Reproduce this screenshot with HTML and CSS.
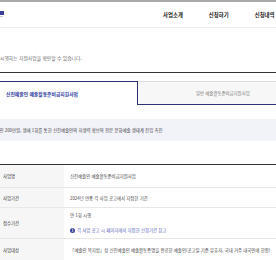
FILE: index.html
```html
<!DOCTYPE html>
<html lang="ko">
<head>
    <meta charset="UTF-8">
    <meta name="viewport" content="width=device-width, initial-scale=1.0">
    <title>예술활동준비금지원사업</title>
    <link rel="stylesheet" href="styles.css">
</head>
<body>
    <div class="topline"></div>
    <header class="header">
        <div class="logo">
            <svg width="4" height="6" viewBox="0 0 4 6"><rect x="0" y="0" width="4" height="4" fill="#3b3f9c"/><rect x="0" y="5" width="3" height="1" fill="#c9c9d6"/></svg>
        </div>
        <nav class="gnb">
            <a href="#">사업소개</a>
            <a href="#">신청하기</a>
            <a href="#">신청내역</a>
        </nav>
    </header>

    <main class="content">
        <p class="intro">시행하는 지원사업을 확인할 수 있습니다.</p>

        <div class="tab-wrap">
            <ul class="tabs">
                <li class="tab active">신진예술인 예술활동준비금지원사업</li>
                <li class="tab">일반 예술활동준비금지원사업</li>
            </ul>
        </div>

        <div class="summary">
            <p>1인 200만원, 생애 1회를 통한 신진예술인의 자생력 확보와 전문 문화예술 생태계 진입 촉진</p>
        </div>

        <div class="info-table">
            <div class="row">
                <div class="label">사업명</div>
                <div class="value">신진예술인 예술활동준비금지원사업</div>
            </div>
            <div class="row">
                <div class="label">사업기간</div>
                <div class="value">2024년 연중 각 사업 공고에서 지정한 기간</div>
            </div>
            <div class="row tall">
                <div class="label">접수기간</div>
                <div class="value">
                    <p>연 1회 시행</p>
                    <p class="note"><span class="ico">i</span>각 사업 공고 시 페이지에서 지정한 신청기간 참고</p>
                </div>
            </div>
            <div class="row">
                <div class="label">사업대상</div>
                <div class="value">「예술인 복지법」상 신진예술인 예술활동증명을 완료한 예술인(공고일 기준 유효자, 국내 거주 내국인에 한함)</div>
            </div>
        </div>
    </main>
</body>
</html>
```

FILE: styles.css
```css
* {
    margin: 0;
    padding: 0;
    box-sizing: border-box;
}

body {
    font-family: "Noto Sans CJK KR", "Noto Sans", sans-serif;
    background: #fff;
    color: #333;
    width: 276px;
    overflow: hidden;
}

ul {
    list-style: none;
}

a {
    color: inherit;
    text-decoration: none;
}

.topline {
    height: 2px;
    background: #a9a9a9;
}

/* header */
.header {
    display: flex;
    align-items: center;
    height: 26px;
    border-bottom: 1px solid #ededed;
}

.logo {
    display: flex;
    width: 4px;
    margin-top: -2px;
}

.gnb {
    display: flex;
    gap: 26px;
    margin-left: 159px;
    white-space: nowrap;
}

.gnb a {
    font-size: 5.4px;
    font-weight: 700;
    color: #222;
}

/* content */
.intro {
    margin-top: 27px;
    font-size: 4.8px;
    line-height: 6px;
    color: #666;
    white-space: nowrap;
}

.tab-wrap {
    margin-top: 11px;
    padding-top: 8px;
    border-top: 1px solid #333;
}

.tabs {
    display: flex;
    height: 24px;
    border-bottom: 1px solid #2d3270;
}

.tab {
    display: flex;
    align-items: center;
    font-size: 4.4px;
    color: #777;
    white-space: nowrap;
}

.tab.active {
    width: 138px;
    padding-left: 6px;
    margin-bottom: -1px;
    background: #fff;
    border-top: 1px solid #2d3270;
    border-right: 1px solid #2d3270;
    font-size: 4.8px;
    font-weight: 700;
    color: #2f3c9e;
}

.tab:not(.active) {
    flex: 1;
    padding-left: 58px;
    background: #f7f7f8;
    border-top: 1px solid #dcdcdc;
}

.summary {
    display: flex;
    align-items: center;
    height: 22px;
    margin-top: 14px;
    background: #f2f2f9;
}

.summary p {
    font-size: 4.4px;
    color: #444;
    text-indent: -3px;
    white-space: nowrap;
}

/* table */
.info-table {
    margin-top: 23px;
    border-top: 1px solid #333;
    border-bottom: 2px solid #333;
}

.row {
    display: grid;
    grid-template-columns: 64px 1fr;
    min-height: 22px;
    border-bottom: 1px solid #e8e8e8;
    font-size: 4.4px;
}

.row:first-child {
    min-height: 23px;
}

.row:nth-child(2) {
    min-height: 20px;
}

.row:last-child {
    border-bottom: none;
    min-height: 21px;
}

.label {
    display: flex;
    align-items: center;
    padding-left: 3px;
    background: #f6f6f6;
    color: #333;
}

.value {
    display: flex;
    align-items: center;
    padding-left: 6px;
    color: #444;
    white-space: nowrap;
}

.row.tall .value {
    flex-direction: column;
    align-items: flex-start;
    justify-content: center;
    padding-top: 4px;
    padding-bottom: 4px;
}

.row.tall .value p {
    line-height: 7px;
}

.row.tall .note {
    display: flex;
    align-items: center;
    gap: 2px;
    margin-top: 8px;
    color: #5362b8;
}

.ico {
    display: inline-flex;
    align-items: center;
    justify-content: center;
    width: 5px;
    height: 5px;
    border-radius: 50%;
    background: #3a4699;
    color: #fff;
    font-size: 3.6px;
    font-weight: 700;
}
```
